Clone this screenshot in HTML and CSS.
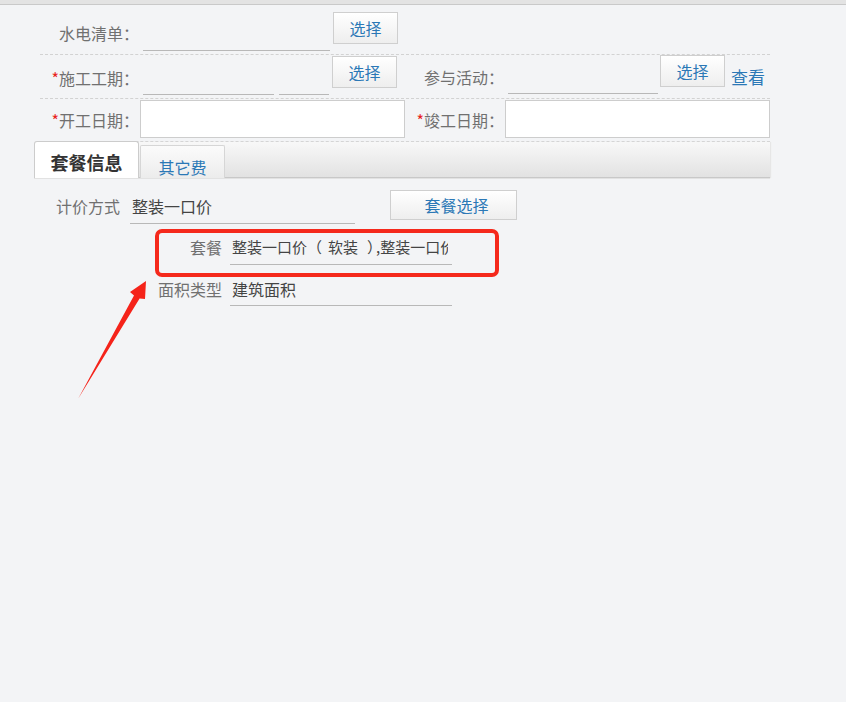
FILE: index.html
```html
<!DOCTYPE html>
<html lang="zh">
<head>
<meta charset="utf-8">
<title>套餐信息</title>
<link rel="stylesheet" href="styles.css">
</head>
<body>
<div class="topbar"></div>
<div class="form">
  <div class="row row1">
    <div class="label l1">水电清单<span class="colon">：</span></div>
    <div class="uline u1"></div>
    <div class="btn b1">选择</div>
  </div>
  <div class="row row2">
    <div class="label l2"><span class="req">*</span>施工工期<span class="colon">：</span></div>
    <div class="uline u2a"></div>
    <div class="uline u2b"></div>
    <div class="btn b2">选择</div>
    <div class="label l2b">参与活动<span class="colon">：</span></div>
    <div class="uline u2c"></div>
    <div class="btn b3">选择</div>
    <a class="link">查看</a>
  </div>
  <div class="row row3">
    <div class="label l3"><span class="req">*</span>开工日期<span class="colon">：</span></div>
    <div class="box"></div>
    <div class="label l3b"><span class="req">*</span>竣工日期<span class="colon">：</span></div>
    <div class="box"></div>
  </div>
</div>
<div class="tabbar">
  <div class="tab active">套餐信息</div>
  <div class="tab other">其它费</div>
</div>
<div class="content">
  <div class="crow">
    <div class="clabel ca">计价方式</div>
    <div class="cval va">整装一口价</div>
    <div class="btn pick">套餐选择</div>
  </div>
  <div class="crow">
    <div class="clabel cb">套餐</div>
    <div class="cval vb small"><span class="clip">整装一口价（<span class="gap1"></span>软装<span class="gap2"></span><span class="rp">）</span>,整装一口价（软装）</span></div>
  </div>
  <div class="crow">
    <div class="clabel cb lc">面积类型</div>
    <div class="cval vb lc">建筑面积</div>
  </div>
</div>
<div class="mark"></div>
<svg class="arrow" width="846" height="702" viewBox="0 0 846 702">
  <polygon points="78,399 134,295.5 130,292 146,281 145,299 139.6,298.5" fill="#f5231a"/>
</svg>
</body>
</html>
```
FILE: styles.css
```css
html, body {
  margin: 0;
  padding: 0;
}
body {
  background: #f3f4f6;
  font-family: "Noto Sans CJK SC", "Microsoft YaHei", sans-serif;
  font-size: 16px;
  color: #444;
  width: 846px;
  height: 702px;
  position: relative;
  overflow: hidden;
}
.topbar {
  height: 4px;
  background: #e3e3e3;
  border-bottom: 1px solid #c9c9c9;
}
.form {
  margin-left: 40px;
  width: 730px;
}
.row {
  display: flex;
  align-items: flex-start;
  border-bottom: 1px dashed #d2d2d2;
  box-sizing: content-box;
}
.row1 { height: 49px; }
.row2 { height: 43px; }
.row3 { height: 42px; }
.label {
  color: #707070;
  line-height: 20px;
  text-align: right;
  white-space: nowrap;
  flex: none;
}
.colon {
  font-family: "Noto Sans CJK JP", "Noto Sans CJK SC", sans-serif;
}
.req { color: #e8231c; }
.l1 { width: 99px; margin-top: 18px; }
.l2 { width: 99px; margin-top: 13px; }
.l3 { width: 99px; margin-top: 11px; }
.l2b { width: 107px; margin-top: 12px; }
.l3b { width: 99px; margin-top: 11px; }
.uline {
  box-sizing: border-box;
  border-bottom: 1px solid #b8b8b8;
  flex: none;
}
.u1 { width: 187px; height: 46px; margin-left: 4px; }
.u2a { width: 131px; height: 40px; margin-left: 4px; }
.u2b { width: 50px; height: 40px; margin-left: 5px; }
.u2c { width: 150px; height: 39px; margin-left: 4px; }
.btn {
  box-sizing: border-box;
  border: 1px solid #cfcfcf;
  background: linear-gradient(#ffffff, #eeeeee);
  color: #2b78b6;
  display: flex;
  align-items: center;
  justify-content: center;
  flex: none;
  height: 32px;
  width: 65px;
}
.b1 { margin-left: 3px; margin-top: 7px; }
.b2 { margin-left: 3px; margin-top: 1px; }
.b3 { margin-left: 2px; margin-top: 0; }
.link {
  color: #2b78b6;
  margin-left: 6px;
  margin-top: 12px;
  line-height: 20px;
  font-size: 17px;
}
.box {
  box-sizing: border-box;
  width: 265px;
  height: 38px;
  margin-top: 1px;
  margin-left: 1px;
  background: #fff;
  border: 1px solid #cdcdcd;
  flex: none;
}
.tabbar {
  margin-left: 34px;
  width: 736px;
  height: 36px;
  box-sizing: border-box;
  display: flex;
  align-items: flex-end;
  background: linear-gradient(#f8f8f8, #e2e2e2);
  border-bottom: 1px solid #c8c8c8;
  box-shadow: 0 1px 0 #e2e2e2, 1px 0 1px #e6e6e6;
}
.tab {
  box-sizing: border-box;
  text-align: center;
  flex: none;
  margin-bottom: -1px;
}
.active {
  width: 105px;
  height: 37px;
  background: #fff;
  border: 1px solid #cccccc;
  border-bottom: none;
  border-radius: 3px 3px 0 0;
  font-size: 18px;
  font-weight: bold;
  color: #333;
  line-height: 24px;
  padding-top: 8px;
}
.other {
  width: 85px;
  height: 33px;
  margin-left: 1px;
  background: linear-gradient(#fbfbfb, #ececec);
  border: 1px solid #d6d6d6;
  border-bottom: none;
  border-radius: 2px 2px 0 0;
  color: #2b78b6;
  line-height: 22px;
  padding-top: 10px;
}
.content {
  margin-left: 34px;
  padding-top: 5px;
}
.crow {
  display: flex;
  align-items: flex-start;
  height: 41px;
}
.clabel {
  box-sizing: border-box;
  color: #707070;
  text-align: right;
  padding-right: 4px;
  padding-top: 12px;
  line-height: 22px;
  flex: none;
}
.ca { width: 90px; }
.cb { width: 192px; }
.cval {
  box-sizing: border-box;
  height: 41px;
  border-bottom: 1px solid #b8b8b8;
  padding-top: 12px;
  padding-left: 2px;
  line-height: 22px;
  color: #444;
  white-space: nowrap;
  overflow: hidden;
  flex: none;
}
.lc { padding-top: 13px; }
.va { width: 225px; margin-left: 6px; }
.vb { width: 222px; margin-left: 4px; }
.small { font-size: 15px; }
.clip {
  display: block;
  width: 216px;
  overflow: hidden;
  white-space: nowrap;
}
.gap1 { display: inline-block; width: 6px; }
.gap2 { display: inline-block; width: 9px; }
.rp { display: inline-block; width: 9px; overflow: visible; }
.pick {
  width: 127px;
  height: 30px;
  margin-left: 35px;
  margin-top: 7px;
  padding-left: 6px;
}
.mark {
  position: absolute;
  left: 155px;
  top: 229px;
  width: 344px;
  height: 48px;
  box-sizing: border-box;
  border: 4px solid #f5291c;
  border-radius: 7px;
}
.arrow {
  position: absolute;
  left: 0;
  top: 0;
}
```
